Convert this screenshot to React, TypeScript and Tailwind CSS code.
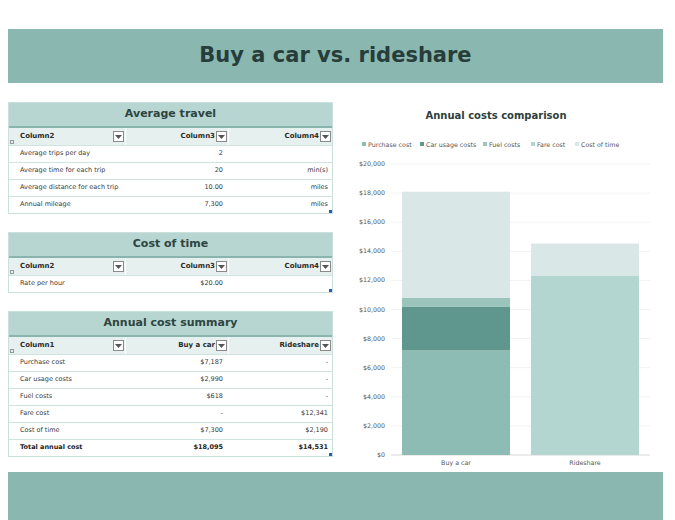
import React from "react";

const F = { fontFamily: '"DejaVu Sans", Verdana, sans-serif' };

function Filter() {
  return (
    <span className="inline-flex items-center justify-center w-[11px] h-[11px] border border-[#8a8a8a] bg-white ml-[1px]">
      <svg width="7" height="4" viewBox="0 0 7 4"><path d="M0 0h7L3.5 4z" fill="#555" /></svg>
    </span>
  );
}

type Row = { c: string[]; bold?: boolean };

function Table({ title, heads, rows }: { title: string; heads: string[]; rows: Row[] }) {
  return (
    <div className="w-[325px] border border-[#c9e0dc] relative">
      <div className="h-[25px] bg-[#b8d6d1] flex items-center justify-center text-[11px] font-bold text-[#2d4441] border-b-2 border-[#8ab5ae]">{title}</div>
      <div className="h-[17px] bg-[#e6f0ef] flex text-[7px] font-bold text-[#2b2b2b] relative">
        <span className="absolute left-[1px] bottom-[1px] w-[4px] h-[4px] border border-[#999]" />
        <div className="w-[117px] flex items-center justify-between pl-[11px] pr-[1px] border-r border-white">{heads[0]}<Filter /></div>
        <div className="w-[103px] flex items-center justify-end pr-[1px] border-r border-white">{heads[1]}<Filter /></div>
        <div className="flex-1 flex items-center justify-end pr-[1px]">{heads[2]}<Filter /></div>
      </div>
      {rows.map((r, i) => (
        <div key={i} className={`h-[17px] flex text-[6.5px] text-[#3a3a3a] border-t border-[#cfe3df] ${r.bold ? "font-bold text-[#222]" : ""}`}>
          <div className="w-[117px] flex items-center pl-[11px]">{r.c[0]}</div>
          <div className="w-[103px] flex items-center justify-end pr-[6px]">{r.c[1]}</div>
          <div className="flex-1 flex items-center justify-end pr-[4px]">{r.c[2]}</div>
        </div>
      ))}
      <span className="absolute right-0 bottom-0 w-[3px] h-[3px] bg-[#2a5db0]" />
    </div>
  );
}

const y = (v: number) => 455 - (v / 20000) * 291;

function Chart() {
  const ticks = [0, 2000, 4000, 6000, 8000, 10000, 12000, 14000, 16000, 18000, 20000];
  const seg = (x: number, a: number, b: number, c: string) => (
    <rect x={x} y={y(b)} width={108} height={y(a) - y(b)} fill={c} />
  );
  const leg = [
    ["Purchase cost", "#8cbcb3"],
    ["Car usage costs", "#5f978e"],
    ["Fuel costs", "#9ac4bc"],
    ["Fare cost", "#b4d6d1"],
    ["Cost of time", "#d9e8e7"],
  ];
  const lx = [367, 425, 488, 536, 580];
  return (
    <svg width="340" height="380" viewBox="340 100 340 380" style={F}>
      <text x="501" y="119" textAnchor="middle" fontSize="10" fontWeight="bold" fill="#2d3f3d">Annual costs comparison</text>
      {leg.map(([n, c], i) => (
        <g key={n}>
          <rect x={lx[i]} y={142} width={4} height={4} fill={c} />
          <text x={lx[i] + 6} y={147} fontSize="6.3" fill="#555">{n}</text>
        </g>
      ))}
      {ticks.map((t) => (
        <g key={t}>
          <line x1="396" x2="655" y1={y(t)} y2={y(t)} stroke={t === 0 ? "#d8d8d8" : "#f2f2f2"} />
          <text x="390" y={y(t) + 2} fontSize="6.3" fill="#555" textAnchor="end">${t.toLocaleString("en-US")}</text>
        </g>
      ))}
      {seg(407, 0, 7187, "#8cbcb3")}
      {seg(407, 7187, 10177, "#5f978e")}
      {seg(407, 10177, 10795, "#9ac4bc")}
      {seg(407, 10795, 18095, "#d9e8e7")}
      {seg(536, 0, 12341, "#b4d6d1")}
      {seg(536, 12341, 14531, "#d9e8e7")}
      <text x="461" y="465" fontSize="6.3" fill="#555" textAnchor="middle">Buy a car</text>
      <text x="590" y="465" fontSize="6.3" fill="#555" textAnchor="middle">Rideshare</text>
    </svg>
  );
}

export default function App() {
  return (
    <div className="w-[675px] h-[520px] bg-white relative overflow-hidden" style={F}>
      <div className="h-[29px]" />
      <div className="mx-[8px] w-[655px] h-[54px] bg-[#8ab8b0] flex items-center justify-center text-[21px] font-bold text-[#263d3a]">Buy a car vs. rideshare</div>
      <div className="flex h-[389px]">
        <div className="pl-[8px] pt-[19px] flex flex-col gap-[18px] w-[340px]">
          <Table title="Average travel" heads={["Column2", "Column3", "Column4"]} rows={[
            { c: ["Average trips per day", "2", ""] },
            { c: ["Average time for each trip", "20", "min(s)"] },
            { c: ["Average distance for each trip", "10.00", "miles"] },
            { c: ["Annual mileage", "7,300", "miles"] },
          ]} />
          <Table title="Cost of time" heads={["Column2", "Column3", "Column4"]} rows={[
            { c: ["Rate per hour", "$20.00", ""] },
          ]} />
          <Table title="Annual cost summary" heads={["Column1", "Buy a car", "Rideshare"]} rows={[
            { c: ["Purchase cost", "$7,187", "-"] },
            { c: ["Car usage costs", "$2,990", "-"] },
            { c: ["Fuel costs", "$618", "-"] },
            { c: ["Fare cost", "-", "$12,341"] },
            { c: ["Cost of time", "$7,300", "$2,190"] },
            { c: ["Total annual cost", "$18,095", "$14,531"], bold: true },
          ]} />
        </div>
        <div className="pt-[17px]"><Chart /></div>
      </div>
      <div className="mx-[8px] w-[655px] h-[48px] bg-[#8ab8b0]" />
    </div>
  );
}
